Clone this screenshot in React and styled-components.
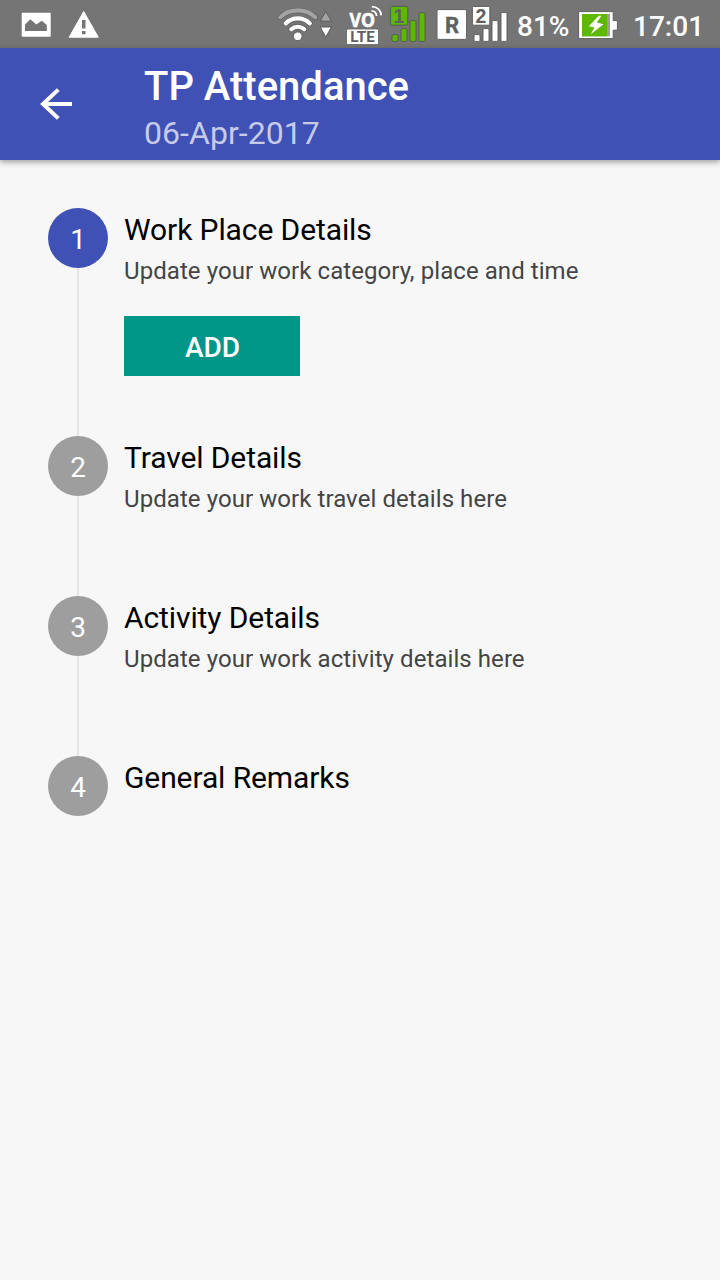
import React from 'react'
import styled, { createGlobalStyle } from 'styled-components'

const GlobalStyle = createGlobalStyle`
  * {
    box-sizing: border-box;
  }

  body {
    margin: 0;
    background: #f7f7f7;
    font-family: Roboto, 'Noto Sans', sans-serif;
  }
`

const Screen = styled.div`
  display: flex;
  flex-direction: column;
  width: 720px;
  height: 1280px;
  overflow: hidden;
  background: #f7f7f7;
`

const StatusBar = styled.div`
  display: flex;
  justify-content: space-between;
  flex: none;
  height: 48px;
  padding: 0 18px 0 20px;
  background: #757575;
  color: #fff;
`

const StatusGroup = styled.div`
  display: flex;
`

const StatusIcon = styled.svg`
  display: block;
  flex: none;
  height: 48px;
  margin-right: ${props => props.$after || 0}px;
`

const StatusText = styled.span`
  width: ${props => props.$width}px;
  margin-right: ${props => props.$after || 0}px;
  font-size: 28px;
  font-weight: 500;
  line-height: 53px;
  white-space: nowrap;
`

const AppBar = styled.header`
  display: flex;
  flex: none;
  height: 112px;
  background: #3f51b5;
  box-shadow: 0 2px 6px rgba(0, 0, 0, 0.38);
`

const BackButton = styled.button`
  display: flex;
  align-items: center;
  justify-content: center;
  width: 112px;
  height: 112px;
  margin-right: 32px;
  padding: 0;
  border: 0;
  background: none;
`

const Heading = styled.div`
  padding-top: 15px;
`

const Title = styled.h1`
  margin: 0;
  color: #fff;
  font-size: 40px;
  font-weight: 500;
  line-height: 47px;
`

const Subtitle = styled.div`
  color: #c5cbe9;
  font-size: 32px;
  letter-spacing: 0.05px;
  line-height: 46px;
`

const Stepper = styled.main`
  display: flex;
  flex-direction: column;
  padding: 48px;
`

const StepRow = styled.section`
  display: flex;
  gap: 16px;
  height: ${props => props.$height}px;
`

const StepRail = styled.div`
  display: flex;
  flex-direction: column;
  align-items: center;
  width: 60px;
`

const StepNumber = styled.div`
  flex: none;
  width: 60px;
  height: 60px;
  border-radius: 50%;
  background: ${props => (props.$active ? '#3f51b5' : '#9e9e9e')};
  color: #fff;
  font-size: 28px;
  line-height: 63px;
  text-align: center;
`

const StepLine = styled.div`
  flex: 1;
  width: 2px;
  background: #e5e5e5;
`

const StepBody = styled.div`
  padding-top: 4px;
`

const StepTitle = styled.h2`
  margin: 0;
  color: #000;
  font-size: 30px;
  font-weight: 400;
  letter-spacing: -0.1px;
  line-height: 36px;
`

const StepText = styled.p`
  margin: 5px 0 0;
  color: #444;
  font-size: 24px;
  letter-spacing: 0.07px;
  line-height: 36px;
`

const AddButton = styled.button`
  display: block;
  width: 176px;
  height: 60px;
  margin-top: 27px;
  padding: 2px 0 0 1px;
  border: 0;
  background: #009688;
  color: #fff;
  font-family: inherit;
  font-size: 28px;
  font-weight: 500;
`

const steps = [
  {
    title: 'Work Place Details',
    text: 'Update your work category, place and time',
    height: 228,
    active: true
  },
  {
    title: 'Travel Details',
    text: 'Update your work travel details here',
    height: 160
  },
  {
    title: 'Activity Details',
    text: 'Update your work activity details here',
    height: 160
  },
  { title: 'General Remarks', height: 60 }
]

const PictureIcon = () => (
  <StatusIcon width="32" viewBox="0 0 32 48" $after={15}>
    <rect x="1.7" y="12.7" width="29" height="24" rx="1" fill="#fff" />
    <path
      d="M5 31V24.5L10.3 19.3L16.3 24.5L21.7 20.8L26.8 25V31Z"
      fill="#757575"
    />
  </StatusIcon>
)

const WarningIcon = () => (
  <StatusIcon width="34" viewBox="0 0 34 48">
    <path
      d="M16.7 11.5L31.3 37.2H2.2Z"
      fill="#fff"
      stroke="#fff"
      strokeLinejoin="round"
    />
    <path d="M15 20h3.5v8.5H15zM15 31h3.5v3.2H15z" fill="#757575" />
  </StatusIcon>
)

const WifiIcon = () => (
  <StatusIcon width="58" viewBox="0 0 58 48" $after={10}>
    <g fill="none" strokeLinecap="round">
      <g stroke="#5c5c5c" strokeWidth="5.6">
        <path d="M4.3 17.2C13.5 8.2 30 8.2 39.2 17.2" />
        <path d="M9.7 23.4C16.5 16.8 27 16.8 33.8 23.4" />
        <path d="M15.3 29.3C19 25.9 24.5 25.9 28.2 29.3" />
      </g>
      <path
        d="M4.3 17.2C13.5 8.2 30 8.2 39.2 17.2"
        stroke="#a3a3a3"
        strokeWidth="4.2"
      />
      <g stroke="#fff" strokeWidth="4.2">
        <path d="M9.7 23.4C16.5 16.8 27 16.8 33.8 23.4" />
        <path d="M15.3 29.3C19 25.9 24.5 25.9 28.2 29.3" />
      </g>
    </g>
    <circle cx="21.7" cy="36.3" r="4.4" fill="#fff" stroke="#5c5c5c" />
    <path d="M49.8 11.4L55.4 21.2H44.2Z" fill="#a3a3a3" stroke="#5c5c5c" />
    <path d="M49.8 37L55.4 27H44.2Z" fill="#fff" stroke="#5c5c5c" />
  </StatusIcon>
)

const VolteIcon = () => (
  <StatusIcon width="40" viewBox="0 0 40 48" $after={5}>
    <text
      x="5.6"
      y="27"
      fill="#fff"
      stroke="#fff"
      strokeWidth="0.6"
      fontFamily="Open Sans, sans-serif"
      fontSize="19"
      fontWeight="700"
      textLength="25.5"
      lengthAdjust="spacingAndGlyphs"
    >
      VO
    </text>
    <g fill="none" stroke="#fff" strokeWidth="1.8">
      <path d="M27.5 10.8C30.6 10.8 32.4 13 32.6 16" />
      <path d="M27.8 6.6C33.3 6.6 37 10.2 37.2 15.4" />
    </g>
    <rect
      x="2.5"
      y="29"
      width="32"
      height="15.6"
      rx="1.5"
      fill="#fff"
      stroke="#606060"
      strokeWidth="0.8"
    />
    <text
      x="6.3"
      y="42"
      fill="#606060"
      fontFamily="Roboto, sans-serif"
      fontSize="14"
      fontWeight="700"
      textLength="24.6"
      lengthAdjust="spacingAndGlyphs"
    >
      LTE
    </text>
  </StatusIcon>
)

const SignalIcon = ({ sim, color, width, after }) => (
  <StatusIcon width={width} viewBox={`0 0 ${width} 48`} $after={after}>
    <g fill={color} stroke="#555" strokeWidth="0.9">
      <rect x="1.4" y="6.4" width="17.4" height="18.8" rx="1.2" />
      <rect x="3" y="34.6" width="6" height="6.8" rx="1.2" />
      <rect x="12" y="28.6" width="6" height="12.8" rx="1.2" />
      <rect x="21" y="20.6" width="6" height="20.8" rx="1.2" />
      <rect x="30" y="12.6" width="6" height="28.8" rx="1.2" />
    </g>
    <text
      x="9.9"
      y="22.6"
      fill="#606060"
      fontFamily="Liberation Sans, sans-serif"
      fontSize="19.5"
      fontWeight="700"
      textAnchor="middle"
    >
      {sim}
    </text>
  </StatusIcon>
)

const RoamingIcon = () => (
  <StatusIcon width="32" viewBox="0 0 32 48" $after={3}>
    <rect
      x="1"
      y="9.6"
      width="29.6"
      height="29.8"
      rx="1.5"
      fill="#fff"
      stroke="#606060"
    />
    <text
      x="16"
      y="32.7"
      fill="#606060"
      stroke="#606060"
      strokeWidth="0.4"
      fontFamily="Roboto, sans-serif"
      fontSize="22"
      fontWeight="700"
      textAnchor="middle"
    >
      R
    </text>
  </StatusIcon>
)

const BatteryIcon = () => (
  <StatusIcon width="41" viewBox="0 0 41 48" $after={14}>
    <path
      d="M0.6 11.6H35.2V20.6H39.4V30.2H35.2V38.6H0.6Z"
      fill="#fff"
      stroke="#5f5f5f"
    />
    <rect x="4" y="14" width="28" height="22.3" fill="#9e9e9e" />
    <rect x="4" y="14" width="25" height="22.3" fill="#5cb800" />
    <path
      d="M20.8 15.8L10.8 26.2L16.4 27.4L12.8 34.2L25.6 24.2L18.8 22.6L23.4 15.8Z"
      fill="#fff"
    />
  </StatusIcon>
)

const BackArrow = () => (
  <svg width="34" height="34" viewBox="0 0 34 34">
    <path
      d="M33 17H4.5M19.3 2.6L4 17L19.3 31.4"
      fill="none"
      stroke="#fff"
      strokeWidth="4"
    />
  </svg>
)

const Step = props => {
  return (
    <StepRow $height={props.height}>
      <StepRail>
        <StepNumber $active={props.active}>{props.number}</StepNumber>
        {!props.last && <StepLine />}
      </StepRail>
      <StepBody>
        <StepTitle>{props.title}</StepTitle>
        {props.text && <StepText>{props.text}</StepText>}
        {props.active && <AddButton>ADD</AddButton>}
      </StepBody>
    </StepRow>
  )
}

const App = () => {
  return (
    <Screen>
      <GlobalStyle />
      <StatusBar>
        <StatusGroup>
          <PictureIcon />
          <WarningIcon />
        </StatusGroup>
        <StatusGroup>
          <WifiIcon />
          <VolteIcon />
          <SignalIcon sim="1" color="#5cb800" width={37} after={10} />
          <RoamingIcon />
          <SignalIcon sim="2" color="#fff" width={37} after={9} />
          <StatusText $width={52} $after={9}>
            81%
          </StatusText>
          <BatteryIcon />
          <StatusText $width={69}>17:01</StatusText>
        </StatusGroup>
      </StatusBar>
      <AppBar>
        <BackButton aria-label="Back">
          <BackArrow />
        </BackButton>
        <Heading>
          <Title>TP Attendance</Title>
          <Subtitle>06-Apr-2017</Subtitle>
        </Heading>
      </AppBar>
      <Stepper>
        {steps.map((step, i) => (
          <Step
            key={step.title}
            number={i + 1}
            last={i === steps.length - 1}
            {...step}
          />
        ))}
      </Stepper>
    </Screen>
  )
}

export default App
